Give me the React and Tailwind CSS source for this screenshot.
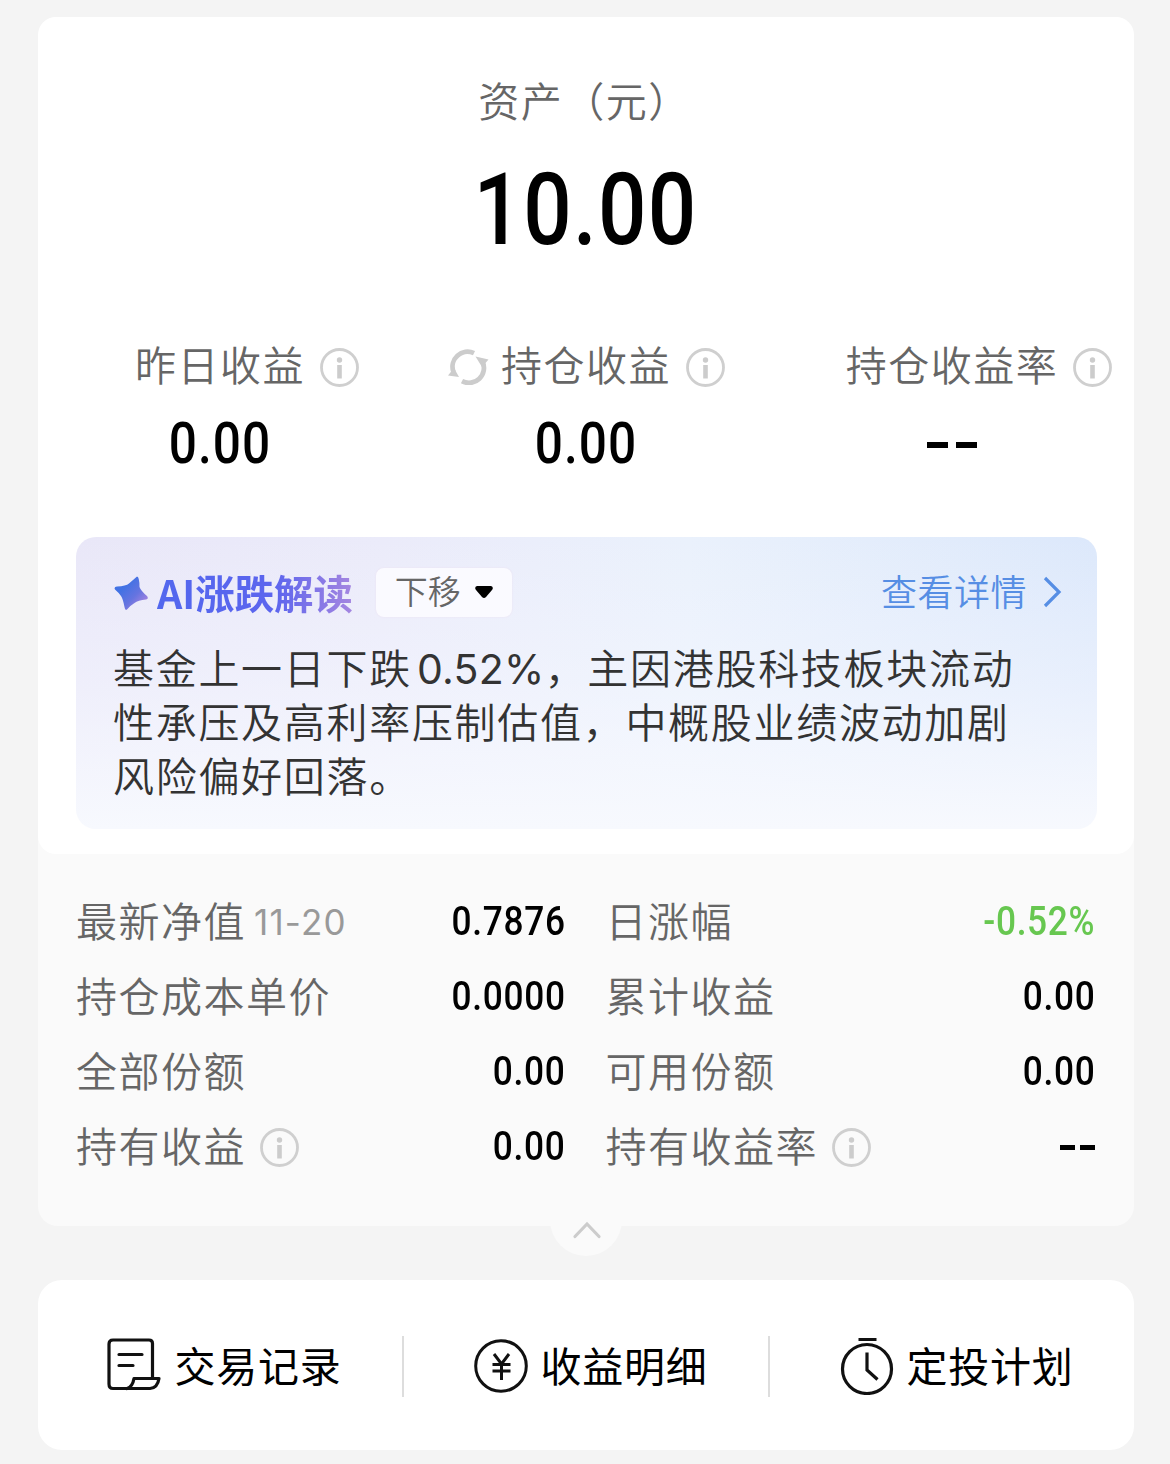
import React from "react";

const CJK = 'font-["Noto_Sans_CJK_SC",sans-serif]';

function InfoIcon({ className = "" }) {
  return (
    <svg viewBox="0 0 39 39" className={`h-[39px] w-[39px] shrink-0 ${className}`} fill="none">
      <circle cx="19.5" cy="19.5" r="18" stroke="#cfcfcf" strokeWidth="2.8" />
      <circle cx="19.5" cy="12" r="2.7" fill="#cccccc" />
      <path d="M19.5 17v13.5" stroke="#cccccc" strokeWidth="4.6" />
    </svg>
  );
}

function RefreshIcon({ className = "" }) {
  return (
    <svg viewBox="0 0 42 36" className={`h-[36px] w-[42px] shrink-0 ${className}`} fill="none">
      <path d="M6.500 23A15 15 0 0 1 27 4.200M15 32.200A15 15 0 0 0 35.500 12.500" stroke="#cccccc" strokeWidth="4.8" />
      <path d="M1 26.500 7 19 12 28ZM41.500 10.500 28.500 7.500 35 18Z" fill="#cccccc" />
    </svg>
  );
}

function Stat({ label, value, refresh, dashes }) {
  return (
    <div className="flex flex-col items-center">
      <div className="flex h-[60px] items-center text-[41px] font-[350] tracking-[1.5px] text-[#666666]">
        {refresh && <RefreshIcon className="-ml-[54px] mr-[12px] mt-[2px]" />}
        <span className="-mt-[4px] whitespace-nowrap">{label}</span>
        <InfoIcon className="-mr-[54px] ml-[15px] mt-[3px]" />
      </div>
      <div className="mt-[17px] flex h-[60px] items-center justify-center text-black">
        {dashes ? <Dashes big /> : (
          <span className='scale-x-[.855] font-["Roboto",sans-serif] text-[58px] font-medium leading-none tracking-[1.2px]'>{value}</span>
        )}
      </div>
    </div>
  );
}

function Dashes({ big }) {
  return (
    <span className={big ? "mt-[3px] flex gap-[8px]" : "mt-[1px] flex gap-[5px]"} aria-label="--">
      <i className={big ? "h-[6px] w-[21px] bg-black" : "h-[5px] w-[15px] bg-black"} />
      <i className={big ? "h-[6px] w-[21px] bg-black" : "h-[5px] w-[15px] bg-black"} />
    </span>
  );
}

function Row({ label, note, value, info, green, dashes }) {
  return (
    <div className="flex h-[75px] items-center justify-between">
      <div className="flex items-center text-[41px] font-[350] tracking-[1.5px] text-[#666666]">
        <span className="-mt-[3px] whitespace-nowrap">{label}</span>
        {note && <span className='ml-[8px] mt-[2px] font-["Inter",sans-serif] text-[35px] font-[380] tracking-[1.2px] text-[#999999]'>{note}</span>}
        {info && <InfoIcon className="ml-[14px] mt-[2px]" />}
      </div>
      {dashes ? <Dashes /> : (
        <span className={`origin-right scale-x-[.86] font-["Roboto",sans-serif] text-[41px] font-medium leading-none tracking-[0.8px] ${green ? "text-[#67c750]" : "text-black"}`}>
          {value}
        </span>
      )}
    </div>
  );
}

function RecordIcon() {
  return (
    <svg viewBox="0 0 54 54" className="h-[54px] w-[54px]" fill="none" stroke="#111" strokeWidth="3.2" strokeLinejoin="round" strokeLinecap="round">
      <path d="M45.500 39V5.500Q45.500 2 42 2H6Q2 2 2 6V46Q2 50.500 6 50.500H43Q50.500 50 52 40.500H27Q25.500 49 20 50.500" />
      <path d="M12 16.500H35M12 27.500H26" />
    </svg>
  );
}

function YuanIcon() {
  return (
    <svg viewBox="0 0 54 54" className="ml-px mt-px h-[54px] w-[54px]" fill="none" stroke="#111" strokeWidth="3">
      <circle cx="27" cy="27" r="25.300" />
      <path d="M20 15l7.500 10L35 15M27.500 25v16M18.500 25.500h18M18.500 32h18" />
    </svg>
  );
}

function ClockIcon() {
  return (
    <svg viewBox="0 0 54 58" className="ml-px mt-[2px] h-[58px] w-[54px]" fill="none" stroke="#111" strokeWidth="3.200">
      <circle cx="27" cy="32" r="24.500" />
      <path d="M18.500 2.500h18M27 15.500V33l10.500 9.500" />
    </svg>
  );
}

function Action({ icon, label }) {
  return (
    <div className="flex flex-1 items-center justify-center pl-[9px] text-[41px] tracking-[0.8px] text-black">
      <div className="flex w-[67px] shrink-0 items-center">{icon}</div>
      <span className="whitespace-nowrap">{label}</span>
    </div>
  );
}

export default function App() {
  return (
    <div className={`h-[1464px] w-[1170px] overflow-hidden bg-[#f4f4f4] pl-[38px] pt-[17px] ${CJK}`}>
      <section className="h-[1209px] w-[1096px] rounded-[20px] bg-[#fafafa]">
        <div className="h-[837px] rounded-[18px] bg-white pt-[53px]">
          <div className="flex h-[60px] items-center justify-center pr-[3px] text-[41px] font-[350] tracking-[1.500px] text-[#666666]">资产（元）</div>
          <div className="mt-[29px] flex h-[100px] items-center justify-center">
            <span className='scale-x-[.845] font-["Roboto",sans-serif] text-[101px] font-medium leading-none tracking-[1.500px] text-black'>10.00</span>
          </div>
          <div className="-mx-px mt-[77px] grid grid-cols-3">
            <Stat label="昨日收益" value="0.00" />
            <Stat label="持仓收益" value="0.00" refresh />
            <Stat label="持仓收益率" dashes />
          </div>

          <div className="ml-[38px] mt-[64px] h-[292px] w-[1021px] rounded-[20px] bg-[linear-gradient(to_bottom,rgba(246,248,255,0)_0%,rgba(246,248,255,.45)_50%,#f7f9fe_100%),linear-gradient(to_right,#e9e7f8_0%,#ebebfa_30%,#eaf1fc_60%,#dce8fb_100%)] pl-[37px] pr-[34px] pt-[26px]">
            <div className="flex h-[60px] items-center">
              <svg viewBox="0 0 34 34" className="ml-px h-[34px] w-[34px]">
                <defs>
                  <linearGradient id="star" x1="0" y1="0" x2="1" y2="1">
                    <stop offset="0.300" stopColor="#4272e4" />
                    <stop offset="0.600" stopColor="#6674e0" />
                    <stop offset="1" stopColor="#c48be0" />
                  </linearGradient>
                </defs>
                <path d="M23 0.500Q25.500 1 25.500 11Q27 15 33 20Q35 23 32 23.500Q24 24 20.500 27Q17 29 13 33.500Q11 35 10.500 31Q9 23 7 20Q5 17 1 13.500Q-0.500 11 3 10.500Q12 10 15 7.500Q19 4 23 0.500Z" fill="url(#star)" />
              </svg>
              <span className="-mt-[3px] ml-[9px] whitespace-nowrap bg-[linear-gradient(to_right,#5267ee_0%,#5c65ee_60%,#a586e0_100%)] bg-clip-text text-[39.400px] font-bold leading-[56px] text-transparent">AI涨跌解读</span>
              <div className="-mt-[2px] ml-[23px] mr-auto flex h-[49px] w-[136px] items-center rounded-[8px] bg-[#fafaff] pl-[19px] text-[33px] font-[350] text-[#666666] shadow-[0_0_2px_#eadff0]">
                <span className="-mt-[4px] leading-none">下移</span>
                <svg viewBox="0 0 18 12" className="ml-[14px] h-[12px] w-[18px]"><path d="M2 0H16Q19 1 17 4L11 11Q9 13 7 11L1 4Q-1 1 2 0Z" /></svg>
              </div>
              <span className="-mt-[6px] text-[36px] font-[350] tracking-[0.500px] text-[#568ee4]">查看详情</span>
              <svg viewBox="0 0 20 32" className="-mt-[2px] ml-[16px] h-[32px] w-[20px]" fill="none" stroke="#568ee4" strokeWidth="3.200"><path d="M2 2l14 14L2 30" /></svg>
            </div>
            <p className="mt-[16px] whitespace-nowrap text-[41px] font-[350] leading-[54px] tracking-[1.700px] text-[#333333]">
              基金上一日下跌<span className='ml-[5px] font-["Inter",sans-serif] text-[41px] font-[380] leading-none tracking-[0.3px]'>0.52%</span>，主因港股科技板块流动<br />
              性承压及高利率压制估值，中概股业绩波动加剧<br />
              风险偏好回落。
            </p>
          </div>
        </div>

        <div className="grid grid-cols-2 gap-x-[40px] pl-[38px] pr-[39px] pt-[30px]">
          <Row label="最新净值" note="11-20" value="0.7876" />
          <Row label="日涨幅" value="-0.52%" green />
          <Row label="持仓成本单价" value="0.0000" />
          <Row label="累计收益" value="0.00" />
          <Row label="全部份额" value="0.00" />
          <Row label="可用份额" value="0.00" />
          <Row label="持有收益" value="0.00" info />
          <Row label="持有收益率" info dashes />
        </div>
        <div className="mx-auto flex h-[72px] w-[72px] items-center justify-center rounded-full bg-[#fafafa]">
          <svg viewBox="0 0 30 18" className="ml-[2px] mt-[19px] h-[18px] w-[30px]" fill="none" stroke="#cccccc" strokeWidth="3.200" strokeLinecap="round"><path d="M3 15.500 15 3 27 15.500" /></svg>
        </div>
      </section>

      <section className="mt-[54px] flex h-[170px] w-[1096px] items-center rounded-[24px] bg-white">
        <Action icon={<RecordIcon />} label="交易记录" />
        <div className="mt-[2px] h-[61px] w-[2px] bg-[#dddddd]" />
        <Action icon={<YuanIcon />} label="收益明细" />
        <div className="mt-[2px] h-[61px] w-[2px] bg-[#dddddd]" />
        <Action icon={<ClockIcon />} label="定投计划" />
      </section>
    </div>
  );
}
